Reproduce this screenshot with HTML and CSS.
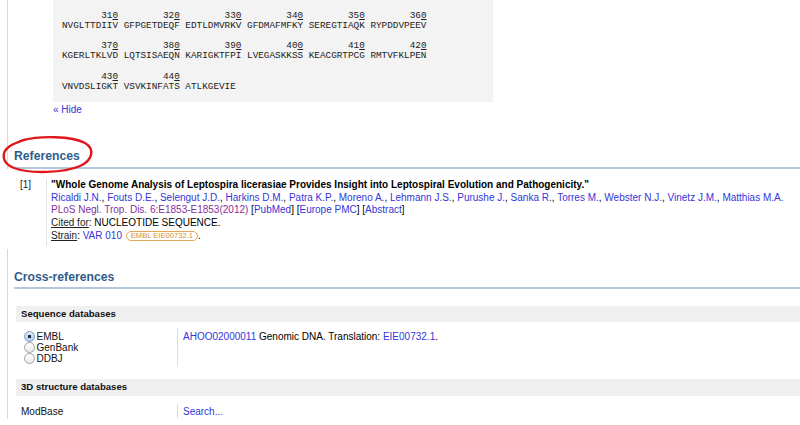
FILE: index.html
```html
<!DOCTYPE html>
<html>
<head>
<meta charset="utf-8">
<title>Entry</title>
<link rel="stylesheet" href="styles.css">
</head>
<body>
<div class="page">
  <section class="rail seq-section">
    <div class="seqbox">
      <div class="blk">
        <div class="nums">       31<span class="u">0</span>        32<span class="u">0</span>        33<span class="u">0</span>        34<span class="u">0</span>        35<span class="u">0</span>        36<span class="u">0</span></div>
        <div class="seq">NVGLTTDIIV GFPGETDEQF EDTLDMVRKV GFDMAFMFKY SEREGTIAQK RYPDDVPEEV</div>
      </div>
      <div class="blk">
        <div class="nums">       37<span class="u">0</span>        38<span class="u">0</span>        39<span class="u">0</span>        40<span class="u">0</span>        41<span class="u">0</span>        42<span class="u">0</span></div>
        <div class="seq">KGERLTKLVD LQTSISAEQN KARIGKTFPI LVEGASKKSS KEACGRTPCG RMTVFKLPEN</div>
      </div>
      <div class="blk">
        <div class="nums">       43<span class="u">0</span>        44<span class="u">0</span></div>
        <div class="seq">VNVDSLIGKT VSVKINFATS ATLKGEVIE</div>
      </div>
    </div>
    <a class="hide" href="#">« Hide</a>
    <h2 class="sec-h refs-h">References</h2>
  </section>

  <section class="refs">
    <div class="ref-row">
      <div class="ref-num">[1]</div>
      <div class="ref-body">
        <div class="ref-title">"Whole Genome Analysis of Leptospira licerasiae Provides Insight into Leptospiral Evolution and Pathogenicity."</div>
        <div class="ref-authors"><a href="#">Ricaldi J.N.</a>, <a href="#">Fouts D.E.</a>, <a href="#">Selengut J.D.</a>, <a href="#">Harkins D.M.</a>, <a href="#">Patra K.P.</a>, <a href="#">Moreno A.</a>, <a href="#">Lehmann J.S.</a>, <a href="#">Purushe J.</a>, <a href="#">Sanka R.</a>, <a href="#">Torres M.</a>, <a href="#">Webster N.J.</a>, <a href="#">Vinetz J.M.</a>, <a href="#">Matthias M.A.</a></div>
        <div class="ref-journal"><a class="visited" href="#">PLoS Negl. Trop. Dis. 6:E1853-E1853(2012)</a> [<a href="#">PubMed</a>] [<a href="#">Europe PMC</a>] [<a href="#">Abstract</a>]</div>
        <div class="ref-line"><span class="lbl">Cited for</span>: NUCLEOTIDE SEQUENCE.</div>
        <div class="ref-line"><span class="lbl">Strain</span>: <a href="#">VAR 010</a> <span class="pill">EMBL EIE00732.1</span>.</div>
      </div>
    </div>
  </section>

  <section class="rail xref-section">
    <h2 class="sec-h">Cross-references</h2>
    <div class="db-head db-head-first">Sequence databases</div>
    <div class="db-row">
      <div class="db-name">
        <label class="radio-opt"><input type="radio" name="db" checked>EMBL</label>
        <label class="radio-opt"><input type="radio" name="db">GenBank</label>
        <label class="radio-opt"><input type="radio" name="db">DDBJ</label>
      </div>
      <div class="db-val"><a href="#">AHOO02000011</a> Genomic DNA. Translation: <a href="#">EIE00732.1</a>.</div>
    </div>
    <div class="db-head">3D structure databases</div>
    <div class="db-row db-row2">
      <div class="db-name">ModBase</div>
      <div class="db-val"><a href="#">Search...</a></div>
    </div>
  </section>

  <svg class="annot" width="100" height="50" viewBox="0 0 100 50">
    <path d="M22 10.5 C40 5.5 72 6 85 13 C95 19 93 30 80 36 C64 43 30 44 14 38 C1 33 1 22 10 16 C14 13.5 18 12 25 9.6" fill="none" stroke="#e1161c" stroke-width="2.4" stroke-linecap="round"/>
  </svg>
</div>
</body>
</html>
```
FILE: styles.css
```css
body {
  margin: 0;
  font-family: "Liberation Sans", Arial, sans-serif;
  font-size: 10px;
  color: #000;
  background: #fff;
}

a {
  color: #3535d8;
  text-decoration: none;
}

a.visited {
  color: #84309a;
}

.page {
  position: relative;
  width: 800px;
  height: 425px;
  overflow: hidden;
}

.rail {
  margin-left: 7px;
  border-left: 1px solid #d9d9d9;
}

.seqbox {
  box-sizing: border-box;
  width: 440px;
  margin-left: 45px;
  padding: 11px 0 10px 9px;
  background: #f3f3f3;
  font-family: "Liberation Mono", "Courier New", monospace;
  font-size: 9.35px;
  line-height: 10px;
  color: #222;
}

.blk + .blk {
  margin-top: 10.3px;
}

.nums,
.seq {
  white-space: pre;
}

.u {
  text-decoration: underline;
}

.hide {
  display: block;
  margin: 2px 0 0 45px;
  line-height: 12px;
}

.sec-h {
  margin: 33px 0 0 6px;
  padding-bottom: 4px;
  font-size: 12.2px;
  line-height: 14px;
  font-weight: bold;
  color: #2f5d8b;
  border-bottom: 2px solid #b5c7dc;
}

.refs {
  padding: 10.4px 0 3px;
}

.ref-row {
  display: flex;
}

.ref-num {
  width: 26px;
  margin-left: 20px;
  line-height: 12.7px;
  color: #222;
}

.ref-body {
  border-left: 1px solid #e2e2e2;
  padding: 0 0 3px 4px;
  line-height: 12.7px;
  white-space: nowrap;
}

.ref-title {
  font-weight: bold;
}

.lbl {
  text-decoration: underline;
  color: #222;
}

.pill {
  display: inline-block;
  margin-left: 1px;
  padding: 0 4px;
  border: 1px solid #e3a65a;
  border-radius: 6px;
  color: #d8902c;
  font-size: 7.6px;
  line-height: 8px;
  vertical-align: 1px;
}

.xref-section {
  padding-top: 21px;
}

.xref-section .sec-h {
  margin-top: 0;
  padding-bottom: 3px;
}

.db-head {
  margin: 0 0 0 8px;
  padding-left: 5px;
  background: #f0f0f0;
  font-weight: bold;
  font-size: 9.6px;
  line-height: 16.5px;
  color: #111;
}

.db-head-first {
  margin-top: 17px;
}

.db-row {
  display: flex;
  margin-left: 8px;
  padding: 6px 0 12px;
}

.db-row2 {
  padding: 8px 0 0;
}

.db-name {
  box-sizing: border-box;
  width: 161px;
  padding: 3px 0 3px 5px;
  line-height: 11px;
  color: #111;
}

.db-row2 .db-name,
.db-row2 .db-val {
  padding-top: 2px;
  padding-bottom: 2px;
}

.db-val {
  border-left: 1px solid #dedede;
  padding: 3px 0 3px 5px;
  line-height: 11px;
}

.radio-opt {
  display: flex;
  align-items: center;
  height: 11px;
}

.radio-opt input {
  appearance: none;
  -webkit-appearance: none;
  box-sizing: border-box;
  width: 11px;
  height: 11px;
  margin: 0 1.5px 0 3px;
  border: 1px solid #a3a3a3;
  border-radius: 50%;
  background: linear-gradient(#ffffff, #e9e9e9);
}

.radio-opt input:checked {
  border-color: #7d9cc8;
  background: radial-gradient(circle, #1e2a3a 0 1.4px, transparent 2px), linear-gradient(#dce8f7, #b8cde9);
}

.annot {
  position: absolute;
  left: 0;
  top: 130px;
}
```
